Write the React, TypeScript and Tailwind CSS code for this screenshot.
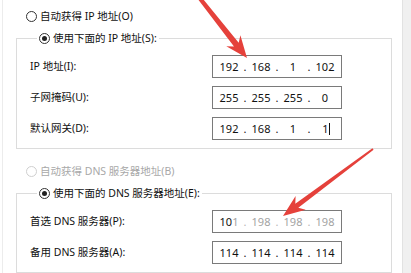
import React from "react";

const LBL = "font-['Noto_Sans','Noto_Sans_CJK_SC',sans-serif] text-[10.5px] leading-none";

function Radio({ checked, disabled }: { checked?: boolean; disabled?: boolean }) {
  return (
    <span
      className={
        disabled
          ? "w-[11px] h-[11px] rounded-full border border-[#cfcfcf] bg-white flex items-center justify-center shrink-0"
          : "w-[11px] h-[11px] rounded-full border border-[#333333] bg-white flex items-center justify-center shrink-0"
      }
    >
      {checked ? <span className="w-[5px] h-[5px] rounded-full bg-[#222222]" /> : null}
    </span>
  );
}

function Field({ children, light }: { children?: React.ReactNode; light?: boolean }) {
  return (
    <span className={light ? "w-[28px] text-center text-[#a3a3a3]" : "w-[28px] text-center"}>{children}</span>
  );
}

function Dot({ light }: { light?: boolean }) {
  return <span className={light ? "w-[4px] text-center text-[#b5b5b5]" : "w-[4px] text-center"}>.</span>;
}

function IpBox({ children }: { children: React.ReactNode }) {
  return (
    <div className="w-[130px] h-[23px] shrink-0 border border-[#7a7a7a] bg-white flex items-center pl-[2px] text-[11px] leading-none text-[#111111] font-['Noto_Sans',sans-serif]">
      {children}
    </div>
  );
}

function Row({ label, children }: { label: string; children: React.ReactNode }) {
  return (
    <div className="flex items-center h-[23px]">
      <span className={LBL + " w-[182px] shrink-0 text-[#111111]"}>{label}</span>
      {children}
    </div>
  );
}

function arrowPts(
  x1: number,
  y1: number,
  x2: number,
  y2: number,
  headLen: number,
  headW: number,
  tailW: number,
  neckW: number
) {
  const dx = x2 - x1;
  const dy = y2 - y1;
  const L = Math.hypot(dx, dy);
  const ux = dx / L;
  const uy = dy / L;
  const px = -uy;
  const py = ux;
  const bx = x2 - ux * headLen;
  const by = y2 - uy * headLen;
  const nx = x2 - ux * headLen * 0.78;
  const ny = y2 - uy * headLen * 0.78;
  const pts = [
    [x1 + (px * tailW) / 2, y1 + (py * tailW) / 2],
    [nx + (px * neckW) / 2, ny + (py * neckW) / 2],
    [bx + (px * headW) / 2, by + (py * headW) / 2],
    [x2, y2],
    [bx - (px * headW) / 2, by - (py * headW) / 2],
    [nx - (px * neckW) / 2, ny - (py * neckW) / 2],
    [x1 - (px * tailW) / 2, y1 - (py * tailW) / 2],
  ];
  return pts.map((p) => p[0].toFixed(1) + "," + p[1].toFixed(1)).join(" ");
}

export default function App() {
  return (
    <div className="relative w-[411px] h-[273px] overflow-hidden bg-white flex">
      <div className="ml-[2px] flex-1 border-l border-[#ececec] flex flex-col">
        {/* auto IP */}
        <div className="mt-[9px] h-[18px] pl-[23px] flex items-center gap-[3px]">
          <Radio />
          <span className={LBL + " text-[#111111]"}>自动获得 IP 地址(O)</span>
        </div>

        <fieldset className="mt-[5px] ml-[13px] w-[376px] border border-[#dcdcdc] pl-[13px] pt-[8px] pb-[8px] flex flex-col gap-[8px]">
          <legend className="ml-[7px] px-[2px] h-[18px] flex items-center gap-[3px]">
            <Radio checked />
            <span className={LBL + " text-[#111111]"}>使用下面的 IP 地址(S):</span>
          </legend>
          <Row label="IP 地址(I):">
            <IpBox>
              <Field>192</Field>
              <Dot />
              <Field>168</Field>
              <Dot />
              <Field>1</Field>
              <Dot />
              <Field>102</Field>
            </IpBox>
          </Row>
          <Row label="子网掩码(U):">
            <IpBox>
              <Field>255</Field>
              <Dot />
              <Field>255</Field>
              <Dot />
              <Field>255</Field>
              <Dot />
              <Field>0</Field>
            </IpBox>
          </Row>
          <Row label="默认网关(D):">
            <IpBox>
              <Field>192</Field>
              <Dot />
              <Field>168</Field>
              <Dot />
              <Field>1</Field>
              <Dot />
              <span className="w-[28px] flex items-center justify-center">
                <span className="ml-[2px]">1</span>
                <span className="w-px h-[12px] bg-[#111111]" />
              </span>
            </IpBox>
          </Row>
        </fieldset>

        {/* auto DNS (disabled) */}
        <div className="mt-[15px] h-[18px] pl-[23px] flex items-center gap-[3px]">
          <Radio disabled />
          <span className={LBL + " text-[#a8a8a8]"}>自动获得 DNS 服务器地址(B)</span>
        </div>

        <fieldset className="mt-[5px] ml-[13px] w-[376px] border border-[#dcdcdc] pl-[13px] pt-[8px] pb-[8px] flex flex-col gap-[8px]">
          <legend className="ml-[7px] px-[2px] h-[18px] flex items-center gap-[3px]">
            <Radio checked />
            <span className={LBL + " text-[#111111]"}>使用下面的 DNS 服务器地址(E):</span>
          </legend>
          <Row label="首选 DNS 服务器(P):">
            <IpBox>
              <span className="w-[28px] text-center">
                10<span className="text-[#a3a3a3]">1</span>
              </span>
              <Dot light />
              <Field light>198</Field>
              <Dot light />
              <Field light>198</Field>
              <Dot light />
              <Field light>198</Field>
            </IpBox>
          </Row>
          <Row label="备用 DNS 服务器(A):">
            <IpBox>
              <Field>114</Field>
              <Dot />
              <Field>114</Field>
              <Dot />
              <Field>114</Field>
              <Dot />
              <Field>114</Field>
            </IpBox>
          </Row>
        </fieldset>
      </div>

      {/* right gray strip */}
      <div className="w-[9px] shrink-0 bg-[#f0f0f0] border-l border-[#e2e2e2]" />

      {/* red arrows */}
      <svg className="absolute inset-0 pointer-events-none" width="411" height="273" viewBox="0 0 411 273">
        <polygon points={arrowPts(198, -4, 247, 58, 22, 18, 4, 6)} fill="#e5413b" />
        <polygon points={arrowPts(373, 149, 283, 216, 22, 17, 2, 5)} fill="#e5413b" />
      </svg>
    </div>
  );
}
